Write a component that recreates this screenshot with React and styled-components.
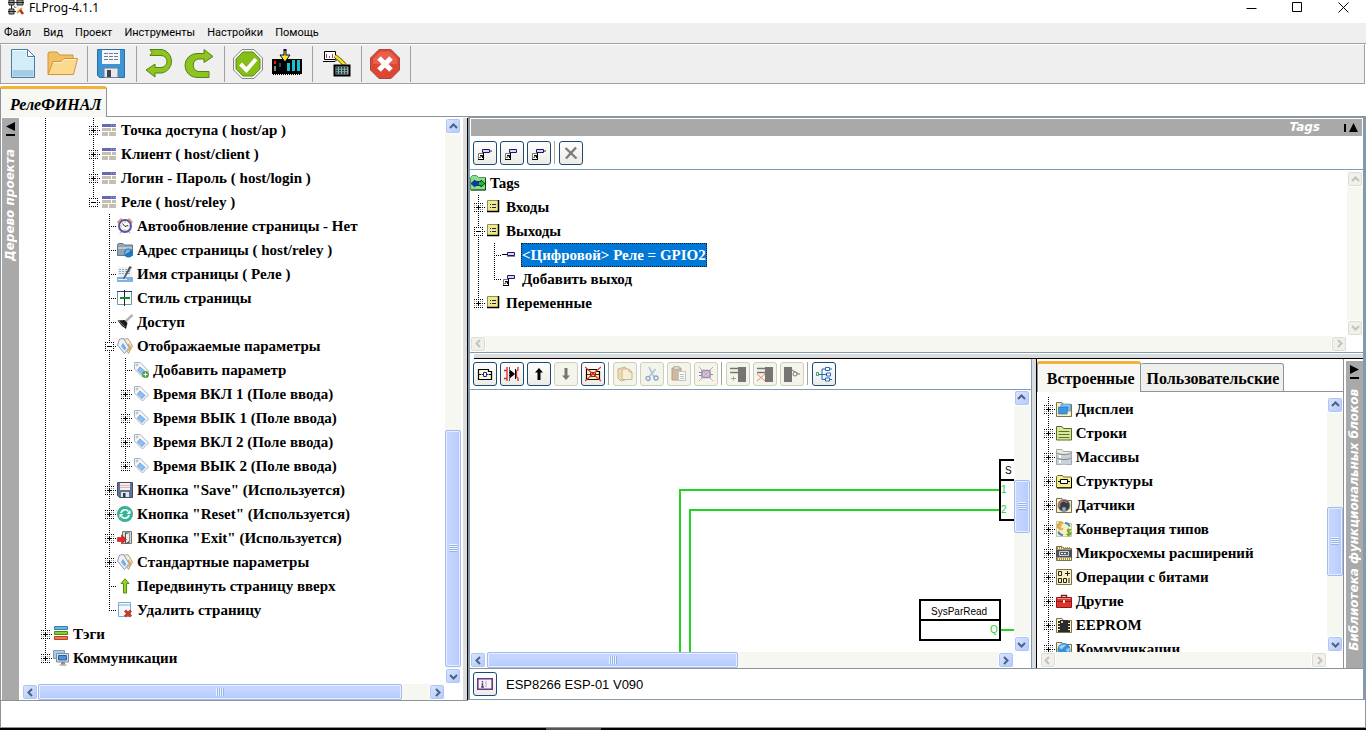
import React from 'react'
import styled, { createGlobalStyle, css } from 'styled-components'

const GlobalStyle = createGlobalStyle`
    *, *::before, *::after {
        box-sizing: border-box;
    }
    body {
        margin: 0;
        background: #fff;
        color: #000;
        font-family: "Noto Sans", "Liberation Sans", sans-serif;
    }
    button {
        padding: 0;
        margin: 0;
        border: none;
        background: none;
        font: inherit;
        color: inherit;
    }
    svg {
        display: block;
        flex: none;
    }
`
const Window = styled.div`
    height: 100vh;
    display: flex;
    flex-direction: column;
    overflow: hidden;
`
const TitleBar = styled.header`
    flex: none;
    height: 23px;
    display: flex;
    align-items: flex-start;
    overflow: hidden;
`
const AppIcon = styled.span`
    padding: 0 5px 0 8px;
`
const Title = styled.h1`
    margin: 0;
    flex: 1;
    font-size: 12px;
    line-height: 16px;
    font-weight: normal;
`
const WindowButton = styled.button`
    width: 46px;
    height: 14px;
    display: flex;
    justify-content: center;
    align-items: center;
`
const MenuBar = styled.nav`
    flex: none;
    height: 21px;
    display: flex;
    align-items: center;
    gap: 12px;
    padding: 0 4px;
    background: #efefef;
    border-bottom: 1px solid #a0a0a0;
`
const MenuItem = styled.button`
    font-family: Roboto, "Liberation Sans", sans-serif;
    font-size: 11px;
    line-height: 16px;
`
const Toolbar = styled.div`
    flex: none;
    height: 40px;
    display: flex;
    background: #efefef;
    border: 1px solid #a0a0a0;
    border-top-color: #fff;
    margin-right: 1px;
`
const ToolGroup = styled.div`
    display: flex;
    align-items: center;
    padding: 0 6px 0 2px;
    border-right: 1px solid #a0a0a0;
    margin: 1px 0;

    & + & {
        padding-left: 3px;
    }
`
const ToolButton = styled.button`
    width: 39px;
    height: 36px;
    display: flex;
    justify-content: center;
    align-items: center;
`
const TabStrip = styled.div`
    flex: none;
    display: flex;
    align-items: flex-end;
    height: 33px;

    &::after {
        content: '';
        flex: 1;
        border-bottom: 1px solid #8b9599;
    }
`
const Tab = styled.button`
    height: ${props => props.$active ? '31px' : '29px'};
    padding: ${props => props.$active ? '3px 5px 0 9px' : '3px 4px 0 6px'};
    font-family: "Liberation Serif", serif;
    font-size: 16px;
    line-height: 20px;
    font-weight: bold;
    font-style: ${props => props.$italic ? 'italic' : 'normal'};
    border: 1px solid #8b9599;
    border-radius: 2px 3px 0 0;
    background: ${props => props.$active ? '#f7f8f3' : '#efefeb'};
    ${props => props.$active && css`
        border-top: 3px solid #f3b13c;
        border-bottom: none;
    `}
    ${props => !props.$active && css`
        border-left: none;
    `}
`
const Main = styled.main`
    flex: 1;
    min-height: 0;
    display: grid;
    grid-template-columns: minmax(0, 468fr) minmax(0, 898fr);
`
const Left = styled.section`
    min-height: 0;
    display: flex;
    padding: 1px 0 0 1px;
    border-left: 1px solid #8b9599;
    border-bottom: 1px solid #8b9599;
    margin-bottom: -1px;
`
const SideTitle = styled.div`
    flex: none;
    width: 17px;
    display: flex;
    flex-direction: column;
    align-items: center;
    gap: ${props => props.$gap};
    padding-top: 4px;
    margin-top: ${props => props.$top || '0'};
    background: #a9a9a9;
`
const SideText = styled.span`
    writing-mode: vertical-rl;
    transform: rotate(180deg);
    white-space: nowrap;
    font-family: "DejaVu Sans", sans-serif;
    font-size: 12px;
    line-height: 17px;
    font-weight: bold;
    font-style: italic;
    color: #fff;
`
const ScrollPane = styled.div`
    flex: 1;
    min-width: 0;
    min-height: 0;
    display: grid;
    grid-template-columns: minmax(0, 1fr) 16px;
    grid-template-rows: minmax(0, 1fr) 16px;
    margin: ${props => props.$margin || '0'};
`
const ScrollBar = styled.div`
    display: flex;
    flex-direction: ${props => props.$vertical ? 'column' : 'row'};
    background: #f7f7f2;
`
const Arrow = styled.button`
    flex: none;
    width: 16px;
    height: 16px;
    display: flex;
    justify-content: center;
    align-items: center;
    border: 1px solid #fff;
    border-radius: 3px;
    box-shadow: inset 0 0 0 1px ${props => props.disabled ? '#dddcd2' : '#b0c5f5'};
    background: ${props => props.disabled ? '#f1f0ea' : 'linear-gradient(135deg, #dbe6ff, #b3c9fb)'};
    color: ${props => props.disabled ? '#c4c3ba' : '#4d6185'};
`
const Space = styled.span`
    flex: ${props => props.$grow} 1 0;
`
const Thumb = styled.span`
    flex: ${props => props.$grow} 1 0;
    display: flex;
    justify-content: center;
    align-items: center;
    border: 1px solid #a3bbee;
    border-radius: 2px;
    box-shadow: inset 0 0 0 1px #e6eeff;
    background: linear-gradient(${props => props.$vertical ? 'to right' : 'to bottom'}, #c8d7ff, #bfd2ff 60%, #b4c9f8);
`
const Grip = styled.span`
    width: 8px;
    height: 8px;
    background: repeating-linear-gradient(${props => props.$vertical ? 'to bottom' : 'to right'}, #eef4fe 0 1px, #98b3ec 1px 2px);
`
const TreeList = styled.ul`
    margin: 0;
    padding: 0 0 0 ${props => props.$indent};
    list-style: none;
    overflow: hidden;
    font-family: "Liberation Serif", serif;
    font-size: 15px;
    font-weight: bold;
`
const TreeRow = styled.li`
    height: 24px;
    display: flex;
    align-items: center;
    white-space: nowrap;
`
const dotsDown = 'repeating-linear-gradient(to bottom, #000 0 1px, transparent 1px 2px)'
const dotsRight = 'repeating-linear-gradient(to right, #000 0 1px, transparent 1px 2px)'
const Guide = styled.span`
    flex: none;
    width: 16px;
    height: 24px;
    display: flex;
    align-items: center;
    justify-content: center;
    background-image: ${dotsDown}, ${dotsRight};
    background-repeat: no-repeat;
    background-position: 8px 0, 8px 12px;
    background-size: ${props => `${props.$down ? `1px ${props.$down}` : '0 0'}, ${props.$branch ? '8px 1px' : '0 0'}`};
`
const Expander = styled.button`
    width: 9px;
    height: 9px;
    margin: 1px 0 0 1px;
`
const Label = styled.span`
    margin-left: 4px;
    line-height: 20px;
    ${props => props.$selected && css`
        margin-left: 3px;
        line-height: 22px;
        background: #0078d7;
        color: #fff;
        border: 1px dotted #1b1b1b;
    `}
`
const Splitter = styled.div`
    flex: none;
    background: #dcdcdc;
    ${props => props.$vertical ? css`
        width: 5px;
        border-right: 1px solid #000;
    ` : css`
        height: 5px;
        margin: 1px 0 0 4px;
        border-bottom: 1px solid #000;
    `}
`
const Right = styled.section`
    min-height: 0;
    display: flex;
    flex-direction: column;
    border: solid #8499ab;
    border-width: 1px 3px 1px 2px;
`
const TagsPanel = styled.section`
    flex: 234 1 0;
    min-height: 0;
    display: flex;
    flex-direction: column;
    padding-top: 1px;
    border-bottom: 1px solid #7f9db0;
`
const PanelHeader = styled.div`
    flex: none;
    height: 17px;
    display: flex;
    align-items: center;
    justify-content: flex-end;
    gap: 24px;
    padding-right: 4px;
    margin: 0 1px;
    background: #a9a9a9;
`
const PanelTitle = styled.h2`
    margin: 0;
    font-family: "DejaVu Sans", sans-serif;
    font-size: 12px;
    line-height: 17px;
    font-style: italic;
    color: #fff;
`
const SmallBar = styled.div`
    flex: none;
    height: ${props => props.$height};
    display: flex;
    align-items: center;
    gap: 3px;
    padding: 0 3px;
    border-bottom: 1px solid #7f9db0;
`
const SmallButton = styled.button`
    flex: none;
    width: 24px;
    height: 24px;
    display: flex;
    justify-content: center;
    align-items: center;
    border: 1px solid ${props => props.disabled ? '#cfcfbf' : '#1c4a75'};
    border-radius: 3px;
    background: ${props => props.disabled ? '#f5f4ea' : 'linear-gradient(#fefefe, #ecebe6)'};

    svg {
        opacity: ${props => props.disabled ? .6 : 1};
    }
`
const Separator = styled.span`
    width: 1px;
    height: 23px;
    margin-right: 1px;
    background: #a5a5a0;
`
const Lower = styled.div`
    flex: 311 1 0;
    min-height: 0;
    display: flex;
    border-bottom: 1px solid #8b9599;
`
const Editor = styled.section`
    flex: 562 1 0;
    min-width: 0;
    display: flex;
    flex-direction: column;
    border-right: 1px solid #7f9db0;
`
const Canvas = styled.div`
    overflow: hidden;
`
const Library = styled.section`
    flex: 307 1 0;
    min-width: 0;
    display: flex;
    flex-direction: column;
    border-right: 1px solid #8b9599;
    margin-right: 2px;
`
const Status = styled.div`
    flex: none;
    height: 30px;
    display: flex;
    align-items: center;
    gap: 9px;
    padding: 0 3px;
    font-family: "Liberation Sans", sans-serif;
    font-size: 13px;
`
const Footer = styled.footer`
    flex: none;
    height: 34px;
    padding-bottom: 4px;

    &::before {
        content: '';
        display: block;
        height: 28px;
        border: 1px solid #8b9599;
        border-top: none;
    }
    &::after {
        content: '';
        display: block;
        height: 2px;
        background: linear-gradient(to right, #000 40%, #555 40% 44%, #000 44%);
    }
`

/* 16x16 pictures used in trees and small toolbars */
const folderBack = <path d="M.5 15.5V1.500H6l1.500 2h8v12z" fill="#f8f0bf" stroke="#77754f" />
const tagShape = (
  <>
    <path d="M1.500.5h6l8 8.500-6 6-8-8z" fill="#f3f6f9" stroke="#a9b3bf" />
    <path d="M7 5l5 4.500-3 3L4.500 8z" fill="#8fbdf2" stroke="#6ea3e2" />
    <circle cx="4" cy="3" r="1" fill="#fff" stroke="#8f98a3" strokeWidth=".7" />
  </>
)
const pictures = {
  page: (
    <>
      <path fill="#c4bfb0" d="M1 6h9v3H1zM11 6h4v3h-4zM1 10h6v4H1zM8 10h7v4H8z" />
      <path fill="#6566b5" d="M1 2h14v3H1z" />
      <path stroke="#a9aae0" strokeDasharray="1 1" d="M10 3.500h5" />
    </>
  ),
  clock: (
    <>
      <path d="M.5 4L4 .5l2 2-3.500 3.500zM15.500 4L12 .5l-2 2 3.500 3.500zM3 15.500l2-3M13 15.500l-2-3" fill="#f1b46a" stroke="#d18a49" />
      <circle cx="8" cy="8" r="6" fill="#fdf8e8" stroke="#5952b5" strokeWidth="2" />
      <path d="M5.500 5.500L8 8.500l3-1" fill="none" stroke="#333" />
      <path d="M8 3.500v1M8 11.500v1M3.500 8h1M11.500 8h1" stroke="#777" />
    </>
  ),
  web: (
    <>
      <path d="M.5 2.500l1-1H6L7.500 3h8v10.500H.5z" fill="#91a4b1" stroke="#64798a" />
      <path d="M1 5h14v2H1z" fill="#bcc8d0" />
      <circle cx="11.500" cy="11" r="4.500" fill="#2177be" />
      <path d="M8.500 9.500c1-2 3-2.500 5-1.500-1 1-1 2-3 3s-2 1-3 .5" fill="#75b8e8" />
    </>
  ),
  rename: (
    <>
      <path d="M1 1h14v10H1z" fill="#edf2f7" />
      <path d="M2 3.500h12M2 5.500h12M2 7.500h12" stroke="#98a3ae" strokeDasharray="2 1" />
      <path d="M0 11h16v5H0z" fill="#83b0e2" />
      <path d="M1 13.500h9" stroke="#e3effb" />
      <path d="M12.500.5L7 11l-1 2 2-1.500L14.500 1z" fill="#4c545c" stroke="#4c545c" strokeWidth=".5" />
    </>
  ),
  style: (
    <>
      <path d="M.5 1.500h14v13H.5z" fill="#fff" stroke="#6b9aa5" />
      <path d="M0 1.500h15" stroke="#263d8d" />
      <path d="M7.500 0v16" stroke="#1d252e" />
      <path d="M3 8h10" stroke="#138a27" strokeWidth="2" />
    </>
  ),
  torch: (
    <>
      <path d="M15.500 1L8 8" stroke="#b0b0b0" strokeWidth="2.500" />
      <path d="M.5 6.500l7-.5 3 3-1.500 6L5 12z" fill="#1d1d1d" />
      <path d="M2 7l6 6" stroke="#777" />
    </>
  ),
  tags: (
    <>
      <path d="M6 1.500l5-1 4.500 7.500-4 7.500L7 8z" fill="#f6ead3" stroke="#a8a297" />
      <path d="M11 6l2.500 3-2 4" fill="none" stroke="#eba04c" strokeWidth="1.500" />
      <path d="M2.500 1L6.500.5l5.500 9-4.500 6L.5 7z" fill="#eef2f6" stroke="#8f9baa" />
      <path d="M6 5l3.500 5-2 2.500L4 8z" fill="#75aee9" />
    </>
  ),
  tag: tagShape,
  tagAdd: (
    <>
      {tagShape}
      <circle cx="12.500" cy="12.500" r="3.500" fill="#4ea24a" />
      <path d="M12.500 10.500v4M10.500 12.500h4" stroke="#fff" />
    </>
  ),
  floppy: (
    <>
      <path d="M.5.5h15v15H2.500l-2-2z" fill="#607290" stroke="#414e68" />
      <path d="M3 1h10v7H3z" fill="#f6efed" />
      <path d="M3 3.500h10M3 5.500h10" stroke="#e4b5ac" />
      <path d="M4 10h8v5H4z" fill="#e2e5ea" />
      <path d="M6 11h2.500v4H6z" fill="#2c374b" />
    </>
  ),
  reset: (
    <>
      <circle cx="8" cy="8" r="8" fill="#35b393" />
      <path d="M4 7a4.200 4.200 0 0 1 7.500-1.500M12 9a4.200 4.200 0 0 1-7.500 1.500" fill="none" stroke="#fff" strokeWidth="1.700" />
      <path d="M13.500 4v4H9.500zM2.500 12V8h4z" fill="#fff" />
    </>
  ),
  exit: (
    <>
      <path d="M5.500 1.500h9v12h-9z" fill="#d7d7d7" stroke="#777" />
      <path d="M8 2.500h4.500v10.500L8 14z" fill="#535353" />
      <path d="M9 4l3-1v8l-3 2z" fill="#eee" />
      <path d="M.5 7.500h4V5l5 4.500-5 4.500v-2.500h-4z" fill="#e22a24" stroke="#a81814" strokeWidth=".6" />
    </>
  ),
  up: <path d="M8 .8L12 5.500H9.500v9.500h-3V5.500H4z" fill="#9bd325" stroke="#548b12" />,
  remove: (
    <>
      <path d="M1.500.5h12v14h-12z" fill="#f3f8fd" stroke="#81a9cf" />
      <path d="M2 3h11" stroke="#b5d4ef" strokeWidth="2" />
      <path d="M8 8.500l6 6M14 8.500l-6 6" stroke="#c23b21" strokeWidth="2.800" />
    </>
  ),
  stack: (
    <>
      <path d="M1.500.5h13v3h-13z" fill="#6eb5e6" stroke="#337fae" />
      <path d="M1.500 5.500h13v3h-13z" fill="#86d01f" stroke="#4d8314" />
      <path d="M1.500 10.500h13v3h-13z" fill="#ee7657" stroke="#b93d28" />
    </>
  ),
  screens: (
    <>
      <path d="M.5.5h11v8H.5z" fill="#a9cced" stroke="#8b98a8" />
      <path d="M3.500 3.500h12v8.500h-12z" fill="#dce3ea" stroke="#7d8a99" />
      <path d="M5.500 5.500h8v4.500h-8z" fill="#4f8fdc" stroke="#29609f" />
      <path d="M8.500 12.500h3v1.500h-3zM6.500 15h7" fill="#999" stroke="#888" />
    </>
  ),
  tagsRoot: (
    <>
      <path d="M.5 15V2.500l2-2h4l2 2h7V15z" fill="#8bdc8e" stroke="#51975a" />
      <path d="M1 15h14.500V3" fill="none" stroke="#163f19" />
      <path d="M1 8.500L5 5v1.500h6V5l4 3.500L11 12v-1.500H5V12z" fill="#14c33c" stroke="#000" strokeWidth=".7" />
      <path d="M1 8.500L5 5v1.500h4v4H5V12z" fill="#1237b3" />
    </>
  ),
  list: (
    <>
      <path d="M1.500 1.500h11v11h-11z" fill="#efec86" stroke="#8d8d70" />
      <path d="M1 12.500h11.500V1" fill="none" stroke="#000" strokeWidth="1.500" />
      <path d="M4 5.500h1M4 8.500h1M6 5.500h4M6 8.500h4" stroke="#23235b" />
    </>
  ),
  output: (
    <>
      <path d="M0 7.500h5" stroke="#000" />
      <path d="M5.500 5.500h7v3h-7z" fill="#d6d6ff" stroke="#181860" />
      <path d="M5 9.500h8" stroke="#8888b5" />
    </>
  ),
  outputAdd: (
    <>
      <path d="M5.500 4.500h7v3h-7z" fill="#d6d6ff" stroke="#181860" />
      <path d="M1.500 8.500h5v6h-5z" fill="#fff" stroke="#777" />
      <path d="M1 14.500h6M6.500 8v7" stroke="#000" />
      <path d="M2.500 13l3-3M3 10.500h2.500V13" fill="none" stroke="#000" />
    </>
  ),
  inputNew: (
    <>
      <path d="M12 6h3" stroke="#181860" />
      <path d="M5.500 4.500h7v3h-7z" fill="#d6d6ff" stroke="#181860" />
      <path d="M1.500 8.500h5v6h-5z" fill="#fff" stroke="#777" />
      <path d="M1 14.500h6M6.500 8v7" stroke="#000" />
      <path d="M2.500 13l3-3M3 10.500h2.500V13" fill="none" stroke="#000" />
    </>
  ),
  cross: <path d="M2.500 3l11 10.500M13 2.500L3 13.500" stroke="#7c7c7c" strokeWidth="2.400" />,
  blockNew: (
    <>
      <path d="M1.500 3.500h10v2h3v8h-13z" fill="#faf8cc" stroke="#000" strokeWidth="1.200" />
      <path d="M4.500 8.500h7" stroke="#1326c0" />
      <path d="M6.500 6.500h3v4h-3z" fill="#fff" stroke="#1326c0" />
      <path d="M1 8.500h3M12 8.500h3" stroke="#000" />
    </>
  ),
  insert: (
    <>
      <path d="M3 1v14M0 4.500h3M0 12.500h3M14 1v3l-1.500 1v6l1.500 1v3" stroke="#d8262a" strokeWidth="1.300" />
      <path d="M5 3l6 5-6 5z" fill="#000" />
      <path d="M11.500 3v10" stroke="#000" />
      <path d="M5.500 1v14" stroke="#555" strokeDasharray="2 1" />
    </>
  ),
  arrowUp: <path d="M8 2l4 4.500H9.500V14h-3V6.500H4z" fill="#000" />,
  arrowDown: <path d="M8 14l4-4.500H9.500V2h-3v7.500H4z" fill="#222" />,
  blockDelete: (
    <>
      <path d="M1.500 3.500h10v2h3v8h-13z" fill="#fff0b8" stroke="#000" strokeWidth="1.200" />
      <path d="M5.500 6.500h5v4h-5zM2 8.500h12" stroke="#6a2a30" />
      <path d="M0 1l16 14M16 1L0 15" stroke="#e0301e" strokeWidth="1.200" />
    </>
  ),
  copy: (
    <>
      <path d="M1 3l7-2 3 3v9l-7 2-3-3z" fill="#e9d199" stroke="#b28c47" />
      <path d="M5 3h7l3 3v7.500H5z" fill="#f6edcf" stroke="#b28c47" />
      <path d="M12 3v3h3" fill="none" stroke="#b28c47" />
    </>
  ),
  cut: (
    <>
      <path d="M5 1l5 10M11.500 3L5 11" stroke="#7f9fc8" strokeWidth="1.500" />
      <circle cx="4" cy="12.500" r="2" fill="none" stroke="#3e76bd" strokeWidth="1.300" />
      <circle cx="12" cy="12" r="2" fill="none" stroke="#3e76bd" strokeWidth="1.300" />
    </>
  ),
  paste: (
    <>
      <path d="M1 2h9v12H1z" fill="#b8946c" stroke="#896845" />
      <path d="M3 .5h5v3H3z" fill="#ccc" stroke="#888" />
      <path d="M7.500 5.500h7v9h-7z" fill="#fff" stroke="#9aa5b4" />
      <path d="M9 8.500h4M9 10.500h4M9 12.500h4" stroke="#91a3bd" />
    </>
  ),
  dropBlock: (
    <>
      <path d="M4 4.500h8v7H4z" fill="#b7a9dc" stroke="#4d50a9" strokeWidth="1.500" />
      <path d="M1 6.500h3M1 9.500h3M12 8.500h3" stroke="#3a3f9d" />
      <path d="M1 1l14 14M15 1L1 15" stroke="#e66852" />
    </>
  ),
  pinAdd: (
    <>
      <path d="M8 1h8v15H8z" fill="#222" />
      <path d="M0 2.500h9M0 6.500h9" stroke="#222" strokeWidth="1.500" />
      <path d="M1 12.500h5M3.500 10.500v4" stroke="#2a9840" />
    </>
  ),
  pinDrop: (
    <>
      <path d="M8 1h8v15H8z" fill="#222" />
      <path d="M0 2.500h9M0 6.500h9" stroke="#222" strokeWidth="1.500" />
      <path d="M0 8l8 7M8 8l-8 7" stroke="#e03a20" />
    </>
  ),
  pinInvert: (
    <>
      <path d="M0 1h8v15H0z" fill="#222" />
      <path d="M8 4l6 3.500M13 8h3" stroke="#222" />
      <circle cx="11" cy="8" r="2" fill="#fff" stroke="#222" />
    </>
  ),
  scheme: (
    <>
      <path d="M.5 6.500h2v3h-2z" fill="#fff" stroke="#3ca161" />
      <path d="M3 8.500h3M9 3H6v10.500h3M6 8.500h4" fill="none" stroke="#2469bb" />
      <path d="M9.500 1.500h4v3h-4zM9.500 12h4v3h-4zM10.500 7h4v3h-4zM14 3h2M14 13.500h2" fill="#fff" stroke="#2469bb" />
    </>
  ),
  info: (
    <>
      <path d="M.8 2.800h14.400v10.400H.8z" fill="#f7f3f9" stroke="#663a86" strokeWidth="1.600" />
      <path d="M5.500 5v1.500M4.500 8h1v3M4 11h3" fill="none" stroke="#663a86" strokeWidth="1.400" />
      <path d="M9 5v6" stroke="#b7a2c6" />
    </>
  ),
  displays: (
    <>
      {folderBack}
      <path d="M5 3h9.500v7H5z" fill="#83c3f2" stroke="#3681c1" strokeWidth=".6" />
      <path d="M2.500 6H12l-1 7H2.500z" fill="#3d96e3" stroke="#2469ad" strokeWidth=".6" />
    </>
  ),
  strings: (
    <>
      <path d="M.5 15V1.500H6l1.500 2h8V15z" fill="#dce69c" stroke="#5a6a25" />
      <path d="M2.500 6.500h11M2.500 9.500h11M2.500 12.500h11" stroke="#4f7722" />
    </>
  ),
  arrays: (
    <>
      <path d="M.5 15.500V.5H6l1.500 2h8v13z" fill="#ece9d6" stroke="#a5a9aa" />
      <path d="M1 3.500c3 2 11 2 14 0v11c-3 1.500-11 1.500-14 0z" fill="#c9d0d6" />
      <path d="M1 4c3 2 11 2 14 0M1 9c3 2 11 2 14 0" fill="none" stroke="#7c8993" />
      <path d="M4 6v3M4 11v3" stroke="#fff" strokeWidth="2" />
    </>
  ),
  structs: (
    <>
      <path d="M.5 14.500v-11l1-1h5l1 1.500h8v10.500z" fill="#f4f08a" stroke="#6a6628" />
      <path d="M4.500 6.500h7v4h-7z" fill="#fff" stroke="#000" />
      <path d="M2 8.500h3M11 8.500h3M1 15h14.500V5" fill="none" stroke="#000" />
    </>
  ),
  sensors: (
    <>
      {folderBack}
      <circle cx="8" cy="8.500" r="6" fill="#363c48" stroke="#8494a8" />
      <path d="M4 10a4 4 0 0 1 7-4" fill="none" stroke="#d96d57" strokeWidth="1.500" />
      <circle cx="8" cy="12" r="2" fill="#97a8bb" />
    </>
  ),
  convert: (
    <>
      <path d="M.5 15.500V.5H6l1.500 2h8v13z" fill="#f8f0bf" stroke="#cfc99b" />
      <path d="M7 2.500a3.200 3.200 0 1 0 0 5M1 4h5M1 6h4" fill="none" stroke="#dca03e" strokeWidth="1.500" />
      <path d="M15 9c-3-1.500-4.500.5-3 1.500s3.500 1 2.500 2.500-3 1-4 0M12.500 7.500v8" fill="none" stroke="#69a632" strokeWidth="1.500" />
      <path d="M9 2c3 0 4 1 4.500 3.500M7 14c-3 0-4-1-4.500-3.500" fill="none" stroke="#3990c9" strokeWidth="2" />
    </>
  ),
  chips: (
    <>
      {folderBack}
      <path d="M0 4.500h16v8H0z" fill="#4b4e54" />
      <path d="M1 3h14M1 14h14" stroke="#b28b37" strokeWidth="2" strokeDasharray="1 1" />
      <path d="M3.500 6.500h9v4h-9z" fill="#555a62" stroke="#cfd2d6" />
      <path d="M5 8.500h6" stroke="#fff" strokeDasharray="2 1" />
    </>
  ),
  bits: (
    <>
      <path d="M.5.5h15v15H.5z" fill="#f8f0bf" stroke="#77754f" />
      <path d="M2.500 2.500h3v4h-3zM2.500 9.500h3v4h-3zM7.500 9.500h3v4h-3zM13 9v5M9 4.500h5M11.500 2v5" fill="none" stroke="#222" />
    </>
  ),
  toolbox: (
    <>
      <path d="M5.500 5V2.500h5V5" fill="none" stroke="#8e1a15" strokeWidth="1.500" />
      <path d="M.5 4.500h15v10H.5z" fill="#e0352c" stroke="#8e1a15" />
      <path d="M1 8.500h14" stroke="#8e1a15" />
      <path d="M1 5.500h14" stroke="#f5857b" />
      <path d="M7 7h2v3H7z" fill="#f6e9e6" />
    </>
  ),
  eeprom: (
    <>
      {folderBack}
      <path d="M4 3h8v12H4z" fill="#2b2b2b" />
      <path d="M3 4v11M13 4v11" stroke="#2b2b2b" strokeWidth="2" strokeDasharray="2 1" />
      <circle cx="6" cy="5" r="1" fill="#fff" />
    </>
  ),
  network: (
    <>
      {folderBack}
      <circle cx="8" cy="8.500" r="6.500" fill="#3b8fda" />
      <path d="M3 6c2-3 6-3 7-2-1 2-2 1-3 3s-3 1-4-1M10 8l4-1c0 2-1 4-3 4z" fill="#9ed0f5" />
    </>
  )
}

/* 32x32 pictures of the main toolbar */
const largePictures = {
  newFile: (
    <>
      <path d="M4.500 1.500h16l7 7v21h-23z" fill="#d4ebf8" stroke="#3f7fa8" />
      <path d="M5.500 22h21v6.500h-21z" fill="#a6cce3" />
      <path d="M5.500 2.500H20v6.500h6.500" fill="none" stroke="#fff" />
      <path d="M20.500 1.500v7h7z" fill="#fff" stroke="#3f7fa8" />
    </>
  ),
  open: (
    <>
      <path d="M2 26V5l1-1h8l3 3h13v5" fill="#f3bf63" stroke="#cf963c" />
      <path d="M2 26.500l5-13h8l3-3h13.500l-4 16z" fill="#fbd98f" stroke="#cf963c" />
      <path d="M7.500 14.500h8l3-3h11.500" fill="none" stroke="#fff1c9" />
    </>
  ),
  save: (
    <>
      <path d="M2.500 1.500h27v28h-25l-2-2z" fill="#3d94d5" stroke="#2670a9" />
      <path d="M7 2h18v14H7z" fill="#f4f8fb" />
      <path d="M9 5.500h14M9 8.500h14M9 11.500h14" stroke="#6d7c8a" strokeDasharray="4 1" />
      <path d="M9 20h14v9.500H9z" fill="#e5e8ec" stroke="#6d8191" />
      <path d="M12 22h4v7h-4z" fill="#3d4650" />
    </>
  ),
  undo: (
    <path d="M6 1.500h12a12 12 0 0 1 0 23.500h-7V29l-9-7 9-6v3.500h6a6 6 0 0 0 0-12H6l2-3z" fill="#8fc31f" stroke="#518514" />
  ),
  redo: (
    <path d="M26 29.500H14a12 12 0 0 1 0-24h7V1.500l9 7-9 6V11h-6a6.500 6.500 0 0 0 0 12.500h11z" fill="#8fc31f" stroke="#518514" />
  ),
  check: (
    <>
      <path d="M10 1.500h12l8.500 8.500v12L22 30.500H10L1.500 22V10z" fill="#f3f3f3" stroke="#85898c" />
      <path d="M11 4h10l7 7v10l-7 7H11l-7-7V11z" fill="#86bd17" stroke="#5f9110" />
      <path d="M8.500 16l6 6 9.500-11" fill="none" stroke="#fff" strokeWidth="4" />
    </>
  ),
  upload: (
    <>
      <path d="M1 11h30v15H1z" fill="#000" />
      <path d="M4 13v3" stroke="#f11" strokeWidth="2" />
      <path d="M4 18v5" stroke="#888" strokeWidth="2" />
      <path d="M17.500 15v8M22.500 12v11M27.500 12v11" stroke="#16c2cd" strokeWidth="3" />
      <path d="M8 16h3M8 18h2" stroke="#16c2cd" strokeDasharray="2 1" />
      <path d="M14 1v8" stroke="#00004e" strokeWidth="3" />
      <path d="M9 7h10l-5 7z" fill="#f5ec18" stroke="#00004e" />
      <path d="M14 3v7" stroke="#f5ec18" />
      <path d="M2 26.500h28" stroke="#000" strokeDasharray="1 1" />
    </>
  ),
  connect: (
    <>
      <path d="M4.500 3.500h11v8h-11z" fill="#fff" stroke="#000" />
      <path d="M6.500 10V6M9.500 10V8M12.500 10V6" stroke="#c0306a" />
      <path d="M3 13.500h12l2-2" fill="none" stroke="#000" />
      <path d="M15 8l5 4 5 5" fill="none" stroke="#5a5200" strokeWidth="4" />
      <path d="M15 8l5 4 5 5" fill="none" stroke="#f5e11b" strokeWidth="2.500" />
      <path d="M14.500 17.500h15v10h-15z" fill="#9aa" stroke="#000" strokeWidth="2" />
      <path d="M16 20h12M16 22.500h12M16 25h12" stroke="#0c3f45" strokeDasharray="2 1" strokeWidth="1.500" />
    </>
  ),
  stop: (
    <>
      <path d="M10 1.500h12l8.500 8.500v12L22 30.500H10L1.500 22V10z" fill="#dd4535" stroke="#a8493f" />
      <path d="M11 3.500h10l7 7.500v5H4v-5z" fill="#e85f4e" />
      <path d="M10 10l12 12M22 10L10 22" stroke="#fff" strokeWidth="5" />
    </>
  )
}

const Icon = ({ name }) => (
  <svg width="16" height="16" viewBox="0 0 16 16" fill="none" aria-hidden="true">{pictures[name]}</svg>
)
const LargeIcon = ({ name }) => (
  <svg width="32" height="32" viewBox="0 0 32 32" fill="none" aria-hidden="true">{largePictures[name]}</svg>
)

const arrowPaths = {
  up: 'M1 6l3.500-3.500L8 6',
  down: 'M1 3l3.500 3.500L8 3',
  left: 'M6 1L2.500 4.500 6 8',
  right: 'M3 1l3.500 3.500L3 8'
}
const arrowNames = { up: 'Вверх', down: 'Вниз', left: 'Влево', right: 'Вправо' }

function ScrollArrow({ dir, disabled }) {
  return (
    <Arrow disabled={disabled} aria-label={arrowNames[dir]}>
      <svg width="9" height="9" viewBox="0 0 9 9" fill="none">
        <path d={arrowPaths[dir]} stroke="currentColor" strokeWidth="2" />
      </svg>
    </Arrow>
  )
}

/* parts: shares of the track before the thumb, of the thumb and after it */
function Scroll({ vertical, parts }) {
  return (
    <ScrollBar $vertical={vertical}>
      <ScrollArrow dir={vertical ? 'up' : 'left'} disabled={!parts} />
      {parts ? (
        <>
          <Space $grow={parts[0]} />
          <Thumb $grow={parts[1]} $vertical={vertical}><Grip $vertical={vertical} /></Thumb>
          <Space $grow={parts[2]} />
        </>
      ) : <Space $grow={1} />}
      <ScrollArrow dir={vertical ? 'down' : 'right'} disabled={!parts} />
    </ScrollBar>
  )
}

/* one letter per 16px column of a row:
   | line, + closed, - open, t branch, l last branch, P closed and last, M open and last */
const guides = {
  ' ': {},
  '|': { down: '24px' },
  '+': { down: '24px', branch: true, sign: '+' },
  '-': { down: '24px', branch: true, sign: '-' },
  't': { down: '24px', branch: true },
  'l': { down: '12px', branch: true },
  'P': { down: '12px', branch: true, sign: '+' },
  'M': { down: '12px', branch: true, sign: '-' }
}

function Tree({ rows, indent }) {
  return (
    <TreeList $indent={indent}>
      {rows.map(([cols, icon, text, selected]) => (
        <TreeRow key={text}>
          {cols.split('').map((c, i) => {
            const { down, branch, sign } = guides[c]
            return (
              <Guide key={i} $down={down} $branch={branch}>
                {sign && (
                  <Expander aria-label={sign === '+' ? 'Развернуть' : 'Свернуть'}>
                    <svg width="9" height="9" viewBox="0 0 9 9" fill="none" shapeRendering="crispEdges">
                      <path d="M1 1h7v7H1z" fill="#fff" />
                      <path d="M0 .5h9M0 8.500h9M.5 0v9M8.500 0v9" stroke="#000" strokeDasharray="1 1" />
                      {sign === '+' && <path d="M0 2.500h9M0 6.500h9" stroke="#999" strokeDasharray="1 1" />}
                      <path d={sign === '+' ? 'M2 4.500h5M4.500 2v5' : 'M2 4.500h5'} stroke="#000" />
                    </svg>
                  </Expander>
                )}
              </Guide>
            )
          })}
          <Icon name={icon} />
          <Label $selected={selected}>{text}</Label>
        </TreeRow>
      ))}
    </TreeList>
  )
}

const projectRows = [
  ['|  +', 'page', 'Точка доступа ( host/ap )'],
  ['|  +', 'page', 'Клиент ( host/client )'],
  ['|  +', 'page', 'Логин - Пароль ( host/login )'],
  ['|  M', 'page', 'Реле ( host/reley )'],
  ['|   t', 'clock', 'Автообновление страницы - Нет'],
  ['|   t', 'web', 'Адрес страницы ( host/reley )'],
  ['|   t', 'rename', 'Имя страницы ( Реле )'],
  ['|   t', 'style', 'Стиль страницы'],
  ['|   t', 'torch', 'Доступ'],
  ['|   -', 'tags', 'Отображаемые параметры'],
  ['|   |t', 'tagAdd', 'Добавить параметр'],
  ['|   |+', 'tag', 'Время ВКЛ 1 (Поле ввода)'],
  ['|   |+', 'tag', 'Время ВЫК 1 (Поле ввода)'],
  ['|   |+', 'tag', 'Время ВКЛ 2 (Поле ввода)'],
  ['|   |P', 'tag', 'Время ВЫК 2 (Поле ввода)'],
  ['|   +', 'floppy', 'Кнопка "Save" (Используется)'],
  ['|   +', 'reset', 'Кнопка "Reset" (Используется)'],
  ['|   +', 'exit', 'Кнопка "Exit" (Используется)'],
  ['|   +', 'tags', 'Стандартные параметры'],
  ['|   t', 'up', 'Передвинуть страницу вверх'],
  ['|   l', 'remove', 'Удалить страницу'],
  ['+', 'stack', 'Тэги'],
  ['P', 'screens', 'Коммуникации']
]
const tagRows = [
  ['', 'tagsRoot', 'Tags'],
  ['+', 'list', 'Входы'],
  ['-', 'list', 'Выходы'],
  ['|t', 'output', '<Цифровой> Реле = GPIO2', true],
  ['|l', 'outputAdd', 'Добавить выход'],
  ['P', 'list', 'Переменные']
]
const libraryRows = [
  ['+', 'displays', 'Дисплеи'],
  ['+', 'strings', 'Строки'],
  ['+', 'arrays', 'Массивы'],
  ['+', 'structs', 'Структуры'],
  ['+', 'sensors', 'Датчики'],
  ['+', 'convert', 'Конвертация типов'],
  ['+', 'chips', 'Микросхемы расширений'],
  ['+', 'bits', 'Операции с битами'],
  ['+', 'toolbox', 'Другие'],
  ['+', 'eeprom', 'EEPROM'],
  ['+', 'network', 'Коммуникации']
]
const menu = ['Файл', 'Вид', 'Проект', 'Инструменты', 'Настройки', 'Помощь']
const tools = [
  [['newFile', 'Новый'], ['open', 'Открыть']],
  [['save', 'Сохранить']],
  [['undo', 'Отменить'], ['redo', 'Повторить']],
  [['check', 'Проверить'], ['upload', 'Загрузить']],
  [['connect', 'Подключить']],
  [['stop', 'Закрыть']]
]
const tagTools = [
  ['inputNew', 'Добавить вход'], ['outputAdd', 'Добавить выход'], ['inputNew', 'Добавить переменную'],
  null,
  ['cross', 'Удалить']
]
const boardTools = [
  ['blockNew', 'Добавить плату'], ['insert', 'Вставить плату'], ['arrowUp', 'Выше'],
  ['arrowDown', 'Ниже', true], ['blockDelete', 'Удалить плату'],
  null,
  ['copy', 'Копировать', true], ['cut', 'Вырезать', true], ['paste', 'Вставить', true], ['dropBlock', 'Удалить блок', true],
  null,
  ['pinAdd', 'Добавить вход', true], ['pinDrop', 'Удалить вход', true], ['pinInvert', 'Инвертировать', true],
  null,
  ['scheme', 'Схема']
]

function SmallTools({ items, height }) {
  return (
    <SmallBar $height={height}>
      {items.map((item, i) => item
        ? <SmallButton key={i} aria-label={item[1]} disabled={item[2]}><Icon name={item[0]} /></SmallButton>
        : <Separator key={i} />)}
    </SmallBar>
  )
}

function Diagram() {
  return (
    <svg width="660" height="400" viewBox="0 0 660 400" fill="none" fontFamily="Liberation Sans, sans-serif" fontSize="10">
      <g stroke="#24d424" strokeWidth="2">
        <path d="M210 400V100h320M220 400V120h310M530 240h60" />
      </g>
      <g stroke="#000" strokeWidth="2">
        <path d="M530 70h80v60h-80zM530 90h80" />
        <path d="M450 210h80v40h-80zM450 230h80" />
      </g>
      <text x="535" y="84" fill="#000">S</text>
      <text x="461" y="225" fill="#000">SysParRead</text>
      <g fill="#24d424">
        <text x="531" y="103">1</text>
        <text x="531" y="123">2</text>
        <text x="520" y="243">Q</text>
      </g>
    </svg>
  )
}

function App() {
  return (
    <>
      <GlobalStyle />
      <Window>
        <TitleBar>
          <AppIcon>
            <svg width="16" height="15" viewBox="0 0 16 15" fill="none" aria-hidden="true">
              <path d="M1 0h5v5H1zM9 0h6v5H9zM1 9h5v5H1z" fill="#999" stroke="#222" />
              <path d="M0 2.500h16M0 11.500h8M3.500 5v4M6 7h4" stroke="#222" />
              <path d="M7 5l6 6" stroke="#eee" strokeWidth="2" />
              <path d="M9 13l5-5" stroke="#e8a32c" strokeWidth="2" />
              <path d="M12 10l3 4" stroke="#b3331c" strokeWidth="2.500" />
            </svg>
          </AppIcon>
          <Title>FLProg-4.1.1</Title>
          <WindowButton aria-label="Свернуть окно">
            <svg width="11" height="11" viewBox="0 0 11 11"><path d="M.5 6.500h10" stroke="#000" /></svg>
          </WindowButton>
          <WindowButton aria-label="Развернуть окно">
            <svg width="11" height="11" viewBox="0 0 11 11"><path d="M.5.5h9v9h-9z" fill="none" stroke="#000" /></svg>
          </WindowButton>
          <WindowButton aria-label="Закрыть окно">
            <svg width="11" height="11" viewBox="0 0 11 11"><path d="M.5.5l10 10M10.500.5l-10 10" stroke="#000" /></svg>
          </WindowButton>
        </TitleBar>

        <MenuBar>
          {menu.map(item => <MenuItem key={item}>{item}</MenuItem>)}
        </MenuBar>

        <Toolbar>
          {tools.map((group, i) => (
            <ToolGroup key={i}>
              {group.map(([name, label]) => (
                <ToolButton key={name} aria-label={label}><LargeIcon name={name} /></ToolButton>
              ))}
            </ToolGroup>
          ))}
        </Toolbar>

        <TabStrip>
          <Tab $active $italic>РелеФИНАЛ</Tab>
        </TabStrip>

        <Main>
          <Left>
            <SideTitle $gap="13px">
              <svg width="11" height="14" viewBox="0 0 11 14"><path d="M10 0v9L1 4.500zM1 12h9v2H1z" fill="#000" /></svg>
              <SideText>Дерево проекта</SideText>
            </SideTitle>
            <ScrollPane $margin="0 2px 0 3px">
              <Tree rows={projectRows} indent="15px" />
              <Scroll vertical parts={[297, 236, 1]} />
              <Scroll parts={[0, 363, 27]} />
            </ScrollPane>
            <Splitter $vertical />
          </Left>

          <Right>
            <TagsPanel>
              <PanelHeader>
                <PanelTitle>Tags</PanelTitle>
                <svg width="14" height="10" viewBox="0 0 14 10"><path d="M0 1h2v8H0zM5 9h9L9.500 0z" fill="#000" /></svg>
              </PanelHeader>
              <SmallTools items={tagTools} height="34px" />
              <ScrollPane $margin="1px 0 0 0">
                <Tree rows={tagRows} indent="0" />
                <Scroll vertical />
                <Scroll />
              </ScrollPane>
            </TagsPanel>
            <Splitter />
            <Lower>
              <Editor>
                <SmallTools items={boardTools} height="31px" />
                <ScrollPane $margin="0 1px 0 0">
                  <Canvas><Diagram /></Canvas>
                  <Scroll vertical parts={[74, 51, 103]} />
                  <Scroll parts={[1, 250, 260]} />
                </ScrollPane>
              </Editor>
              <Splitter $vertical />
              <Library>
                <TabStrip>
                  <Tab $active>Встроенные</Tab>
                  <Tab>Пользовательские</Tab>
                </TabStrip>
                <ScrollPane $margin="5px 0 0 3px">
                  <Tree rows={libraryRows} indent="0" />
                  <Scroll vertical parts={[94, 66, 60]} />
                  <Scroll />
                </ScrollPane>
              </Library>
              <SideTitle $gap="10px" $top="2px">
                <svg width="11" height="14" viewBox="0 0 11 14"><path d="M1 0v9l9-4.500zM1 12h9v2H1z" fill="#000" /></svg>
                <SideText>Библиотека функциональных блоков</SideText>
              </SideTitle>
            </Lower>
            <Status>
              <SmallButton aria-label="Контроллер"><Icon name="info" /></SmallButton>
              <span>ESP8266 ESP-01 V090</span>
            </Status>
          </Right>
        </Main>
        <Footer />
      </Window>
    </>
  )
}

export default App
